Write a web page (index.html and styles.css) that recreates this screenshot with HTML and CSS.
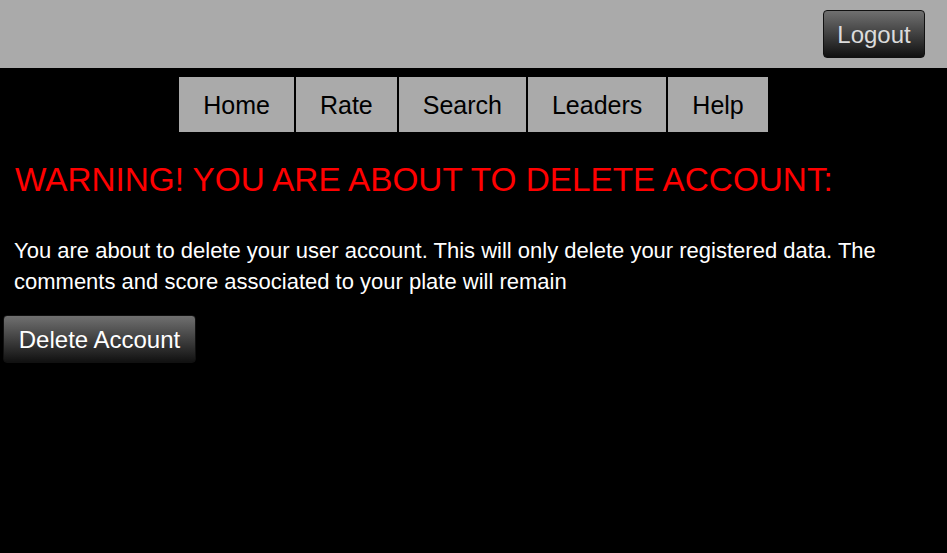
FILE: index.html
```html
<!DOCTYPE html>
<html>
<head>
<meta charset="utf-8">
<link rel="stylesheet" href="styles.css">
</head>
<body>
<header class="topbar">
  <button class="btn btn-logout">Logout</button>
</header>
<nav class="nav">
  <a class="nav-item" href="#">Home</a>
  <a class="nav-item" href="#">Rate</a>
  <a class="nav-item" href="#">Search</a>
  <a class="nav-item" href="#">Leaders</a>
  <a class="nav-item" href="#">Help</a>
</nav>
<main class="content">
  <h1 class="warning">WARNING! YOU ARE ABOUT TO DELETE ACCOUNT:</h1>
  <p class="info">You are about to delete your user account. This will only delete your registered data. The comments and score associated to your plate will remain</p>
  <button class="btn btn-delete">Delete Account</button>
</main>
</body>
</html>
```

FILE: styles.css
```css
html, body {
  margin: 0;
  padding: 0;
  background: #000;
  font-family: "Liberation Sans", Arial, sans-serif;
  height: 100%;
}
.topbar {
  background: #aaaaaa;
  height: 68px;
  display: flex;
  justify-content: flex-end;
  align-items: flex-start;
  padding: 10px 22px 0 0;
  box-sizing: border-box;
}
.btn {
  font-family: "Liberation Sans", Arial, sans-serif;
  font-size: 24px;
  border: 1px solid #111;
  border-radius: 4px;
  background: linear-gradient(#707070, #111111);
  cursor: pointer;
  padding: 2px 0 0 0;
}
.btn-logout {
  width: 102px;
  height: 48px;
  color: #dcdcdc;
}
.nav {
  display: flex;
  justify-content: center;
  padding-top: 9px;
  gap: 2px;
}
.nav-item {
  background: #aaaaaa;
  color: #000;
  text-decoration: none;
  font-size: 25px;
  height: 55px;
  line-height: 57px;
  padding: 0 24px;
}
.content {
  padding: 0;
}
.warning {
  color: #ff0000;
  font-weight: normal;
  font-size: 33.3px;
  margin: 0;
  padding: 29px 0 0 15px;
  line-height: 37px;
}
.info {
  color: #fff;
  font-size: 22px;
  line-height: 31px;
  margin: 37px 0 0 14px;
  padding-right: 20px;
}
.btn-delete {
  margin: 18px 0 0 3px;
  width: 193px;
  height: 48px;
  color: #fff;
}
```
